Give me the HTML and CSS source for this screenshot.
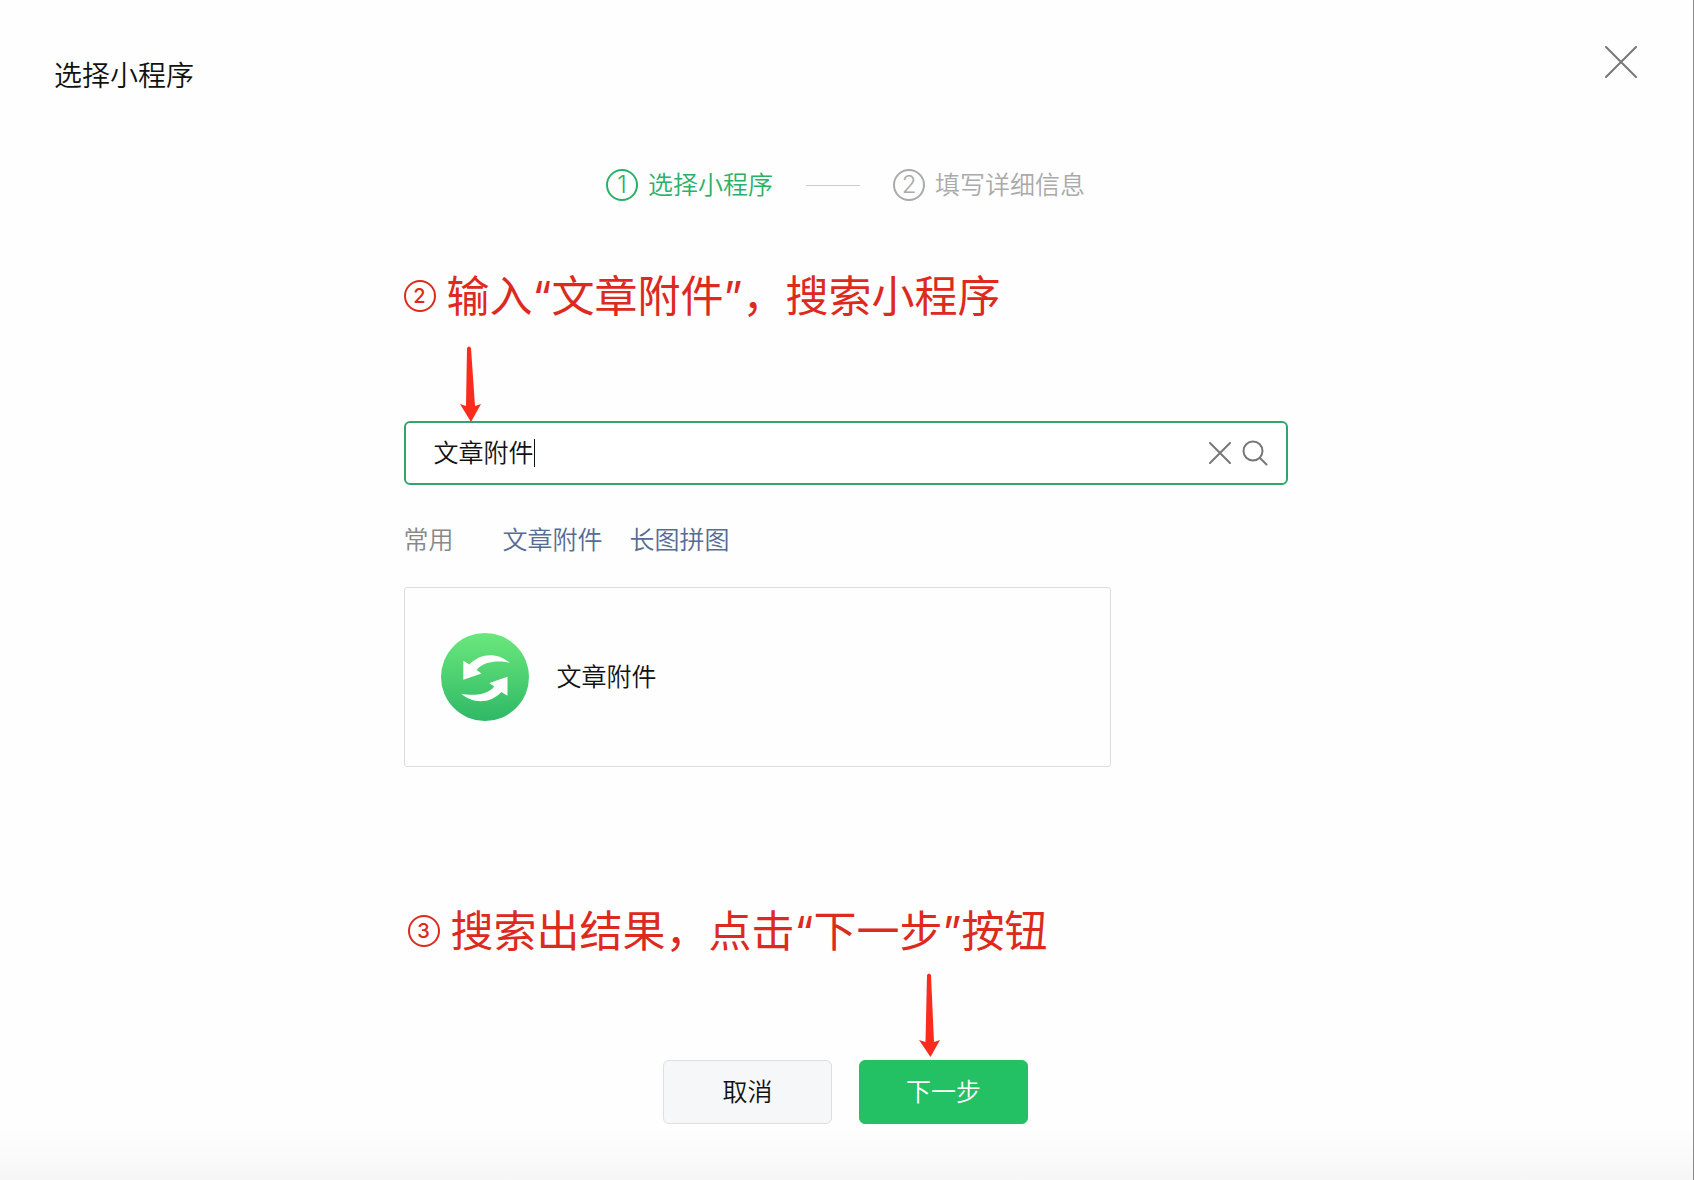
FILE: index.html
```
<!DOCTYPE html>
<html lang="zh-CN">
<head>
  <meta charset="UTF-8" />
  <meta name="viewport" content="width=device-width, initial-scale=1.0"/>
  <title>选择小程序</title>
  <link rel="stylesheet" href="styles.css">
</head>
<body>
  <div class="dialog">
    <!-- Header with title and close button -->
    <header class="dialog-header">
      <h1>选择小程序</h1>
      <button class="icon-btn" type="button" aria-label="关闭">
        <svg width="32" height="32" viewBox="0 0 32 32"><path d="M1 1L31 31M31 1L1 31"/></svg>
      </button>
    </header>

    <!-- Steps -->
    <ol class="steps">
      <li class="step active"><span class="step-num">1</span>选择小程序</li>
      <li class="step-line" aria-hidden="true"></li>
      <li class="step"><span class="step-num">2</span>填写详细信息</li>
    </ol>

    <main class="content">
      <div class="note">
        <p><span class="note-num">2</span>输入“文章附件”，搜索小程序</p>
        <svg class="arrow arrow-search" width="22" height="76" viewBox="0 0 22 76"><path d="M7 2Q9 -1 11 2L15 60L21 58L11 76L0 58L6 60Z"/></svg>
      </div>

      <form class="search">
        <label class="search-field">
          <input type="text" value="文章附件" aria-label="搜索小程序">
          <span class="caret"></span>
        </label>
        <button class="icon-btn" type="button" aria-label="清空">
          <svg width="22" height="22" viewBox="0 0 22 22"><path d="M1 1L21 21M21 1L1 21"/></svg>
        </button>
        <button class="icon-btn" type="button" aria-label="搜索">
          <svg width="26" height="26" viewBox="0 0 26 26"><circle cx="11" cy="11" r="9.500"/><path d="M18 18L24.500 24.500"/></svg>
        </button>
      </form>

      <div class="tags">
        <span>常用</span>
        <a href="#">文章附件</a>
        <a href="#">长图拼图</a>
      </div>

      <!-- Search result -->
      <div class="result">
        <svg width="88" height="88" viewBox="0 0 88 88">
          <defs>
            <linearGradient id="logo" x1="0" y1="0" x2="0" y2="1">
              <stop offset="0" stop-color="#6be87c"/>
              <stop offset="1" stop-color="#2fb866"/>
            </linearGradient>
            <path id="swoosh" d="M22.300 27.700L28.500 31.500C39 20 56 19 68.700 29.700C58 27.500 43 28 35.500 37L40.500 40.500L22.300 46.700Z"/>
          </defs>
          <circle cx="44" cy="44" r="44" fill="url(#logo)"/>
          <use href="#swoosh" fill="#fff"/>
          <use href="#swoosh" fill="#fff" transform="rotate(180 44.400 45.200)"/>
        </svg>
        <span>文章附件</span>
      </div>

      <div class="note note-next">
        <p><span class="note-num">3</span>搜索出结果，点击“下一步”按钮</p>
        <svg class="arrow arrow-next" width="22" height="84" viewBox="0 0 22 84"><path d="M8 2Q10 -1 12 2L15 69L21 67L11.500 84L0 67L6.500 69Z"/></svg>
      </div>
    </main>

    <footer class="actions">
      <button class="btn" type="button">取消</button>
      <button class="btn primary" type="button">下一步</button>
    </footer>
  </div>
</body>
</html>
```

FILE: styles.css
```
* {
  box-sizing: border-box;
}

body {
  margin: 0;
  font-family: Inter, "Noto Sans CJK SC", sans-serif;
  font-size: 25px;
  font-weight: 350;
  line-height: 32px;
  color: #111;
  background: #fefefe;
}

button,
input {
  font: inherit;
  color: inherit;
}

button {
  cursor: pointer;
}

.dialog {
  min-height: 100vh;
  padding: 0 2px 55px 0;
  border-right: 1px solid #888;
  background: linear-gradient(to top, #f6f6f6, #fefefe 50px);
}

.dialog-header {
  display: flex;
  justify-content: space-between;
  align-items: flex-start;
  padding: 46px 54px 0 54px;
}

.dialog-header h1 {
  margin: 0;
  padding-top: 10px;
  font-size: 28px;
  font-weight: 350;
  line-height: 40px;
}

.icon-btn {
  display: flex;
  padding: 0;
  border: none;
  background: none;
}

.icon-btn svg {
  fill: none;
  stroke: #777;
  stroke-width: 2;
  stroke-linecap: round;
}

.steps {
  display: flex;
  justify-content: center;
  align-items: center;
  gap: 33px;
  margin: 73px 0 65px;
  padding: 0;
  list-style: none;
}

.step {
  display: flex;
  align-items: center;
  gap: 10px;
  color: #aaa;
}

.step.active {
  color: #2bb069;
}

.step-num {
  width: 32px;
  height: 32px;
  border: 2px solid;
  border-radius: 50%;
  font-size: 24px;
  font-weight: 300;
  line-height: 28px;
  text-align: center;
}

.step-line {
  width: 54px;
  height: 1px;
  background: #ccc;
}

.content {
  max-width: 884px;
  margin: 0 auto;
}

/* Red tutorial notes */
.note p {
  display: flex;
  align-items: center;
  margin: 0;
  font-size: 43px;
  font-weight: 400;
  line-height: 60px;
  color: #dd2a1f;
}

.note-num {
  width: 32px;
  height: 32px;
  margin-right: 11px;
  border: 2px solid;
  border-radius: 50%;
  font-size: 20px;
  font-weight: 500;
  line-height: 28px;
  text-align: center;
}

.arrow {
  display: block;
  fill: #f92c1e;
}

.arrow-search {
  margin: 20px 0 0 56px;
}

.arrow-next {
  margin: 12px 0 0 511px;
}

.note-next {
  margin-top: 134px;
  padding-left: 4px;
}

.search {
  display: flex;
  align-items: center;
  gap: 11px;
  height: 64px;
  margin-top: -1px;
  padding: 0 18px 0 28px;
  border: 2px solid #32a56c;
  border-radius: 6px;
  background: #fff;
}

.search-field {
  position: relative;
  flex: 1;
}

.search-field input {
  display: block;
  width: 100%;
  padding: 0;
  border: none;
  outline: none;
  background: none;
}

.caret {
  position: absolute;
  top: 2px;
  left: 100px;
  width: 1px;
  height: 28px;
  background: #111;
}

.tags {
  display: flex;
  gap: 27px;
  margin: 39px 0 31px;
}

.tags span {
  margin-right: 22px;
  color: #888;
}

.tags a {
  color: #576b95;
  text-decoration: none;
}

.result {
  display: flex;
  align-items: center;
  gap: 28px;
  width: 80%;
  height: 180px;
  padding: 0 36px;
  border: 1px solid #dcdcdc;
  border-radius: 3px;
}

.actions {
  display: flex;
  justify-content: center;
  gap: 27px;
  margin-top: 3px;
}

.btn {
  width: 169px;
  height: 64px;
  border: 1px solid #dedfe2;
  border-radius: 6px;
  background: #f6f7f9;
}

.btn.primary {
  border-color: #23c064;
  background: #23c064;
  color: #fff;
}
```
